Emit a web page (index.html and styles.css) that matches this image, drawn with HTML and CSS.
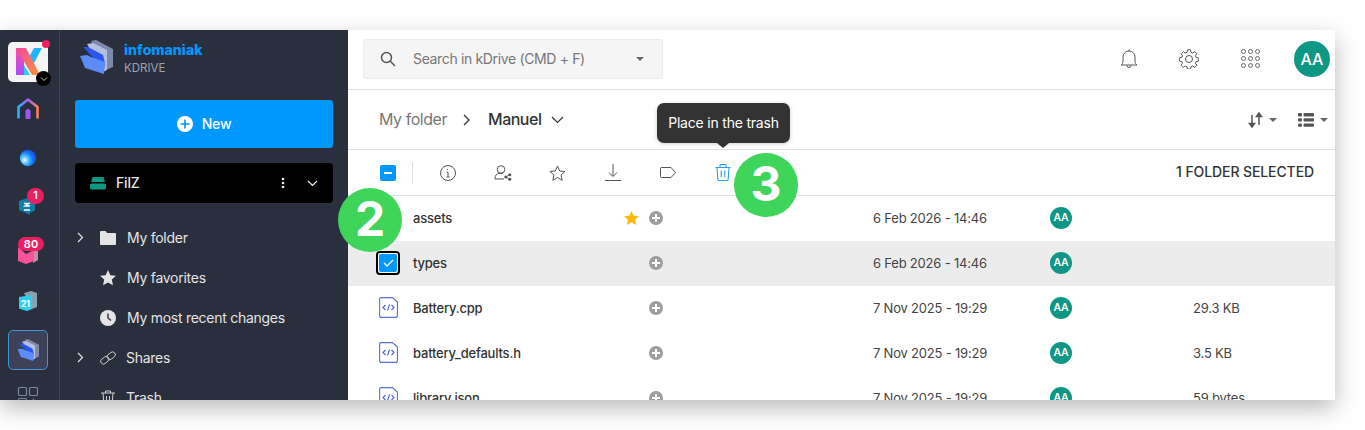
FILE: index.html
```html
<!DOCTYPE html>
<html lang="en">
<head>
    <meta charset="UTF-8">
    <title>kDrive</title>
    <link rel="stylesheet" href="styles.css">
</head>
<body>

<div class="window">
    <!-- App rail -->
    <div class="rail">
        <div class="rail-item logo-tile">
            <svg width="40" height="40" viewBox="0 0 40 40">
                <defs>
                    <linearGradient id="kLeft" x1="0" y1="0" x2="0" y2="1"><stop offset="0" stop-color="#ff4fa0"/><stop offset="1" stop-color="#a84dff"/></linearGradient>
                    <linearGradient id="kBand" x1="0" y1="0" x2="1" y2="1"><stop offset="0" stop-color="#f0489f"/><stop offset="1" stop-color="#ff9433"/></linearGradient>
                </defs>
                <path d="M8 6h8v27H8z" fill="url(#kLeft)"/>
                <path d="M21 15l5-9h8l-8 15z" fill="#1fb6ff"/>
                <path d="M16 33v-10l6 10z" fill="#27d0ff"/>
                <path d="M8 6h10l14 27h-8z" fill="url(#kBand)"/>
            </svg>
            <span class="dot"></span>
            <span class="tile-more">
                <svg width="8" height="8" viewBox="0 0 8 8"><path d="M1 2.500l3 3 3-3" fill="none" stroke="#ccc" stroke-width="1"/></svg>
            </span>
        </div>
        <div class="rail-item">
            <svg width="40" height="40" viewBox="0 0 40 40">
                <defs>
                    <linearGradient id="homeG" x1="0" y1="0" x2="1" y2="0"><stop offset="0" stop-color="#27b4ff"/><stop offset=".5" stop-color="#a35cf5"/><stop offset="1" stop-color="#ff7f5c"/></linearGradient>
                </defs>
                <path d="M10.500 28.500v-11.500l9.500-7.500 9.500 7.500v11.500" fill="none" stroke="url(#homeG)" stroke-width="2.600" stroke-linejoin="round"/>
                <path d="M17.500 21.500a2.500 2.500 0 0 1 5 0v7.500h-5z" fill="#9a58f0"/>
            </svg>
        </div>
        <div class="rail-item">
            <svg width="40" height="40" viewBox="0 0 40 40">
                <defs>
                    <radialGradient id="ball" cx=".3" cy=".62" r=".8"><stop offset="0" stop-color="#f2fbff"/><stop offset=".3" stop-color="#4fc0ff"/><stop offset=".6" stop-color="#1478f5"/><stop offset="1" stop-color="#1a38d8"/></radialGradient>
                </defs>
                <circle cx="20" cy="20" r="8.200" fill="url(#ball)"/>
            </svg>
        </div>
        <div class="rail-item">
            <svg width="40" height="40" viewBox="0 0 40 40">
                <path d="M19 12l8 3.500v9l-5 2.500-1 2-2-1.500-8-3.500v-9z" fill="#0f7ea8"/>
                <path d="M16 17.500h5l-4 2.500h5M16 24h6" fill="none" stroke="#fff" stroke-width="1.300"/>
            </svg>
            <span class="count count-one">1</span>
        </div>
        <div class="rail-item">
            <svg width="40" height="40" viewBox="0 0 40 40">
                <path d="M25 14l5 1v11l-5 3z" fill="#c98aa8"/>
                <path d="M10 13l8 7 8-4v11l-8 3-8-3z" fill="#f9539a"/>
            </svg>
            <span class="count count-many">80</span>
        </div>
        <div class="rail-item">
            <svg width="40" height="40" viewBox="0 0 40 40">
                <path d="M16 11l7-2 6 2v14l-5 2z" fill="#8aa0b0"/>
                <path d="M11 15l13-2v14l-5 2-8-2.500z" fill="#2fd0ee"/>
                <text x="17.500" y="25" class="cal-text">21</text>
            </svg>
        </div>
        <div class="rail-item is-active">
            <svg width="22" height="22" viewBox="0 0 34 34">
                <use href="#driveLogo"/>
            </svg>
        </div>
        <div class="rail-item">
            <svg width="40" height="40" viewBox="0 0 40 40">
                <g fill="none" stroke="#7d8794" stroke-width="1.200">
                    <rect x="10.500" y="9.500" width="8" height="8" rx="1"/>
                    <rect x="21.500" y="9.500" width="8" height="8" rx="1"/>
                    <rect x="10.500" y="20.500" width="8" height="8" rx="1"/>
                    <path d="M25.500 20.500v8M21.500 24.500h8"/>
                </g>
            </svg>
        </div>
    </div>

    <!-- Sidebar -->
    <div class="sidebar">
        <div class="brand">
            <svg width="34" height="34" viewBox="0 0 34 34">
                <defs>
                    <g id="driveLogo">
                        <path d="M12 1l5-1 17 9v18l-7 3z" fill="#7f8aab"/>
                        <path d="M8 4l6-1 14 7v20l-4 2z" fill="#b3c0e0"/>
                        <path d="M4 7l5 0 15 8 2 8-1 6z" fill="#2a55ee"/>
                        <path d="M1 16l7-1 4 2 14 5-1 12-19-6z" fill="#5c8cf7"/>
                    </g>
                </defs>
                <use href="#driveLogo"/>
            </svg>
            <div>
                <div class="brand-name">infomaniak</div>
                <div class="brand-sub">KDRIVE</div>
            </div>
        </div>

        <button class="new-btn">
            <svg width="16" height="16" viewBox="0 0 16 16"><circle cx="8" cy="8" r="8" fill="#fff"/><path d="M8 3.500v9M3.500 8h9" stroke="#0098ff" stroke-width="1.600"/></svg>
            <span class="nudge">New</span>
        </button>

        <div class="drive-box">
            <svg width="16" height="13" viewBox="0 0 16 13"><path d="M2.500 0h11L15 5H1z" fill="#0e9784"/><rect y="6.500" width="16" height="6" rx="1.500" fill="#0e9784"/></svg>
            <span class="drive-name nudge">FilZ</span>
            <svg class="drive-dots" width="4" height="12" viewBox="0 0 4 12"><circle cx="2" cy="2" r="1.300" fill="#eee"/><circle cx="2" cy="6" r="1.300" fill="#eee"/><circle cx="2" cy="10" r="1.300" fill="#eee"/></svg>
            <svg width="11" height="7" viewBox="0 0 11 7"><path d="M1 1l4.500 4.500L10 1" fill="none" stroke="#eee" stroke-width="1.200"/></svg>
        </div>

        <ul class="nav">
            <li>
                <svg class="nav-arrow" width="7" height="11" viewBox="0 0 7 11"><path d="M1 1l4.500 4.500L1 10" fill="none" stroke="#e4e4e4" stroke-width="1.200"/></svg>
                <svg class="nav-icon" width="16" height="14" viewBox="0 0 16 14"><path d="M0 1a1 1 0 0 1 1-1h4.500L7 2h8a1 1 0 0 1 1 1v10a1 1 0 0 1-1 1H1a1 1 0 0 1-1-1z" fill="#e4e4e4"/></svg>
                <span class="nudge">My folder</span>
            </li>
            <li>
                <svg class="nav-icon" width="16" height="16" viewBox="0 0 16 16"><path d="M8 0l2.400 5.200 5.600.6-4.200 3.800 1.200 5.600L8 12.400l-5 2.800 1.200-5.600L0 5.800l5.600-.6z" fill="#e4e4e4"/></svg>
                <span class="nudge">My favorites</span>
            </li>
            <li>
                <svg class="nav-icon" width="16" height="16" viewBox="0 0 16 16"><circle cx="8" cy="8" r="8" fill="#e4e4e4"/><path d="M8 3.500V8l3 2.500" fill="none" stroke="#2a2f3e" stroke-width="1.400"/></svg>
                <span class="nudge">My most recent changes</span>
            </li>
            <li>
                <svg class="nav-arrow" width="7" height="11" viewBox="0 0 7 11"><path d="M1 1l4.500 4.500L1 10" fill="none" stroke="#e4e4e4" stroke-width="1.200"/></svg>
                <svg class="nav-icon tight" width="16" height="14" viewBox="0 0 16 14"><g fill="none" stroke="#cfcfcf" stroke-width=".9"><rect x=".3" y="6.500" width="9" height="5.500" rx="2.700" transform="rotate(-38 4.800 9.200)"/><rect x="6.700" y="2" width="9" height="5.500" rx="2.700" transform="rotate(-38 11.200 4.800)"/></g></svg>
                <span class="nudge">Shares</span>
            </li>
            <li>
                <svg class="nav-icon tight" width="16" height="16" viewBox="0 0 16 16"><g fill="none" stroke="#cfcfcf" stroke-width="1"><path d="M1 3h14M5.500 3V1h5v2M3 3l1 12h8l1-12M6.500 6v6M9.500 6v6"/></g></svg>
                <span class="nudge">Trash</span>
            </li>
        </ul>
    </div>

    <!-- Main -->
    <div class="main">
        <div class="topbar">
            <div class="search">
                <svg width="16" height="16" viewBox="0 0 16 16"><circle cx="6.500" cy="6.500" r="5" fill="none" stroke="#555" stroke-width="1.500"/><path d="M10.300 10.300L15 15" stroke="#555" stroke-width="1.500"/></svg>
                <span class="search-text">Search in kDrive (CMD + F)</span>
                <span class="caret"></span>
            </div>
            <div class="top-icons">
                <svg width="18" height="20" viewBox="0 0 18 20"><g fill="none" stroke="#555" stroke-width="1"><path d="M1 16c1.500-1 2-2 2-4V8a6 6 0 0 1 12 0v4c0 2 .5 3 2 4z"/><path d="M7 16.500a2 2 0 0 0 4 0M9 .5v1.500"/></g></svg>
                <svg class="gear-icon" width="20" height="20" viewBox="0 0 20 20"><g fill="none" stroke="#555" stroke-width="1"><circle cx="10" cy="10" r="3.500"/><path d="M8.500.8h3l.5 2.500 1.700.7 2.100-1.400 2.100 2.100-1.400 2.100.7 1.700 2.500.5v3l-2.500.5-.7 1.700 1.400 2.100-2.100 2.100-2.100-1.400-1.700.7-.5 2.500h-3l-.5-2.500-1.700-.7-2.100 1.400-2.100-2.100 1.400-2.100-.7-1.700-2.500-.5v-3l2.500-.5.7-1.700-1.400-2.100 2.100-2.100 2.100 1.400 1.700-.7z"/></g></svg>
                <svg class="apps-icon" width="19" height="19" viewBox="0 0 19 19"><g fill="none" stroke="#666" stroke-width="1"><circle cx="2.500" cy="2.500" r="2"/><circle cx="9.500" cy="2.500" r="2"/><circle cx="16.500" cy="2.500" r="2"/><circle cx="2.500" cy="9.500" r="2"/><circle cx="9.500" cy="9.500" r="2"/><circle cx="16.500" cy="9.500" r="2"/><circle cx="2.500" cy="16.500" r="2"/><circle cx="9.500" cy="16.500" r="2"/><circle cx="16.500" cy="16.500" r="2"/></g></svg>
                <span class="avatar-big">AA</span>
            </div>
        </div>

        <div class="crumbs">
            <span class="crumb-parent nudge">My folder</span>
            <svg class="crumb-sep" width="8" height="12" viewBox="0 0 8 12"><path d="M1 1l5 5-5 5" fill="none" stroke="#333" stroke-width="1.300"/></svg>
            <span class="crumb-current nudge">Manuel</span>
            <svg width="13" height="8" viewBox="0 0 13 8"><path d="M1 1l5.500 5.500L12 1" fill="none" stroke="#333" stroke-width="1.200"/></svg>
            <div class="view-tools">
                <span class="view-tool">
                    <svg width="15" height="16" viewBox="0 0 15 16"><path d="M4 3v11M1.500 11.500L4 15l2.500-3.500z" stroke="#555" stroke-width="1.500" fill="#555"/><path d="M11 13V2M8.500 4.500L11 1l2.500 3.500z" stroke="#555" stroke-width="1.500" fill="#555"/></svg>
                    <span class="caret small"></span>
                </span>
                <span class="view-tool">
                    <svg width="16" height="14" viewBox="0 0 16 14" fill="#555"><rect y="0" width="4" height="3.400" rx="1"/><rect x="5.500" y="0" width="10.500" height="3.400" rx="1"/><rect y="5.200" width="4" height="3.400" rx="1"/><rect x="5.500" y="5.200" width="10.500" height="3.400" rx="1"/><rect y="10.400" width="4" height="3.400" rx="1"/><rect x="5.500" y="10.400" width="10.500" height="3.400" rx="1"/></svg>
                    <span class="caret small"></span>
                </span>
            </div>
        </div>

        <div class="toolbar">
            <span class="check-minus"></span>
            <span class="tool-sep"></span>
            <div class="tools">
                <span class="tool"><svg width="16" height="16" viewBox="0 0 16 16"><g fill="none" stroke="#555" stroke-width="1"><circle cx="8" cy="8" r="7.500"/><path d="M6.500 7H8v5M6.500 12h3M7.500 4v1"/></g></svg></span>
                <span class="tool"><svg width="18" height="16" viewBox="0 0 18 16"><g fill="none" stroke="#555" stroke-width="1"><circle cx="7" cy="4.500" r="3.800"/><path d="M10 14H1c-.3-3.500 2-5.500 4-5.700h4"/></g><g fill="#555"><circle cx="15.800" cy="9.700" r="1.500"/><circle cx="11.800" cy="12" r="1.500"/><circle cx="15.800" cy="14.300" r="1.500"/></g><path d="M15.800 9.700l-4 2.300 4 2.300" fill="none" stroke="#555" stroke-width=".8"/></svg></span>
                <span class="tool"><svg width="17" height="16" viewBox="0 0 17 16"><path d="M8.500 1l2.200 5 5.300.5-4 3.600 1.200 5.200-4.700-2.800-4.700 2.800L5 10.100 1 6.500 6.300 6z" fill="none" stroke="#555" stroke-width="1"/></svg></span>
                <span class="tool"><svg width="16" height="17" viewBox="0 0 16 17"><g fill="none" stroke="#555" stroke-width="1"><path d="M8 0v12M4 8.500l4 4 4-4M0 16.500h16"/></g></svg></span>
                <span class="tool"><svg width="16" height="11" viewBox="0 0 16 11"><path d="M1.500.5H11l4.500 5-4.500 5H1.500a1 1 0 0 1-1-1v-8a1 1 0 0 1 1-1z" fill="none" stroke="#555" stroke-width="1"/></svg></span>
                <span class="tool"><svg width="16" height="17" viewBox="0 0 16 17"><g fill="none" stroke="#2b9bef" stroke-width="1.100"><path d="M.5 3.500h15M5 3.500V1.200a.7.7 0 0 1 .7-.7h4.600a.7.7 0 0 1 .7.7v2.300M2 3.500l.8 11.500a1.500 1.500 0 0 0 1.500 1.500h7.400a1.500 1.500 0 0 0 1.500-1.500L14 3.500M6.200 6.500v6.500M9.800 6.500v6.500"/></g></svg></span>
            </div>
            <span class="selected-count nudge">1 FOLDER SELECTED</span>
        </div>

        <div class="rows">
            <div class="row">
                <span></span>
                <span class="file-name">assets</span>
                <svg class="star" width="15" height="14" viewBox="0 0 15 14"><path d="M7.500 0l2.200 4.700 5.300.6-3.900 3.500 1.100 5.200-4.700-2.700L2.800 14l1.100-5.200L0 5.300l5.300-.6z" fill="#fdb813"/></svg>
                <span class="add-tag"></span>
                <span class="date">6 Feb 2026 - 14:46</span>
                <span class="avatar-small">AA</span>
                <span></span>
            </div>
            <div class="row is-selected">
                <span class="check-ring"><span class="check-on"><svg width="11" height="8" viewBox="0 0 11 8"><path d="M1 4l3 3 6-6" fill="none" stroke="#fff" stroke-width="1.300"/></svg></span></span>
                <span class="file-name">types</span>
                <span></span>
                <span class="add-tag"></span>
                <span class="date">6 Feb 2026 - 14:46</span>
                <span class="avatar-small">AA</span>
                <span></span>
            </div>
            <div class="row">
                <svg class="file-icon" width="19" height="21" viewBox="0 0 19 21"><use href="#codeFile"/></svg>
                <span class="file-name">Battery.cpp</span>
                <span></span>
                <span class="add-tag"></span>
                <span class="date">7 Nov 2025 - 19:29</span>
                <span class="avatar-small">AA</span>
                <span class="size">29.3 KB</span>
            </div>
            <div class="row">
                <svg class="file-icon" width="19" height="21" viewBox="0 0 19 21">
                    <defs>
                        <g id="codeFile">
                            <path d="M2 .6h11.500L18.400 5v13.400a2 2 0 0 1-2 2H2.600a2 2 0 0 1-2-2V2a1.400 1.400 0 0 1 1.400-1.400z" fill="none" stroke="#5b6fd6" stroke-width="1.100"/>
                            <path d="M6.500 8l-2.500 2.500L6.500 13M12.500 8l2.500 2.500-2.500 2.500M10.500 7.500l-2 6" fill="none" stroke="#4a62d8" stroke-width="1.100"/>
                        </g>
                    </defs>
                    <use href="#codeFile"/>
                </svg>
                <span class="file-name">battery_defaults.h</span>
                <span></span>
                <span class="add-tag"></span>
                <span class="date">7 Nov 2025 - 19:29</span>
                <span class="avatar-small">AA</span>
                <span class="size">3.5 KB</span>
            </div>
            <div class="row">
                <svg class="file-icon" width="19" height="21" viewBox="0 0 19 21"><use href="#codeFile"/></svg>
                <span class="file-name">library.json</span>
                <span></span>
                <span class="add-tag"></span>
                <span class="date">7 Nov 2025 - 19:29</span>
                <span class="avatar-small">AA</span>
                <span class="size">59 bytes</span>
            </div>
        </div>

        <!-- Tooltip and step markers sit over the content -->
        <div class="tooltip">Place in the trash</div>
        <div class="step step-two">2</div>
        <div class="step step-three">3</div>
    </div>
</div>

</body>
</html>
```

FILE: styles.css
```css
* {
    box-sizing: border-box;
}
html, body {
    height: 430px;
    overflow: hidden;
}
body {
    margin: 0;
    padding: 30px 30px 0 0;
    background-color: #fff;
    font-family: Inter, "Liberation Sans", sans-serif;
    color: #333;
}
svg {
    display: block;
    flex: none;
}
.nudge {
    margin-bottom: 2px;
}
.window {
    display: flex;
    height: 370px;
    background-color: #fff;
    overflow: hidden;
    box-shadow: 0 8px 22px rgba(0, 0, 0, 0.28);
}

/* Rail */
.rail {
    width: 60px;
    flex: none;
    display: flex;
    flex-direction: column;
    align-items: center;
    gap: 8px;
    padding: 12px 3px 0 0;
    background-color: #2a2f3e;
    border-right: 1px solid #3c4352;
}
.rail-item {
    position: relative;
    width: 40px;
    height: 40px;
    flex: none;
    display: flex;
    align-items: center;
    justify-content: center;
    border-radius: 5px;
}
.logo-tile {
    background-color: #f5f5f5;
}
.is-active {
    background-color: #3e4259;
    border: 1px solid #3f95d8;
}
.dot {
    position: absolute;
    top: -2px;
    right: -2px;
    width: 8px;
    height: 8px;
    border-radius: 50%;
    background-color: #ee1f63;
}
.tile-more {
    position: absolute;
    right: -3px;
    bottom: -4px;
    width: 15px;
    height: 15px;
    border-radius: 50%;
    background-color: #000;
    display: flex;
    align-items: center;
    justify-content: center;
}
.count {
    position: absolute;
    height: 16px;
    min-width: 16px;
    border-radius: 8px;
    background-color: #e91e63;
    color: #fff;
    font-size: 10.500px;
    font-weight: 600;
    line-height: 16px;
    text-align: center;
}
.count-one {
    top: 2px;
    left: 19px;
    width: 17px;
}
.count-many {
    top: 3px;
    left: 10px;
    width: 26px;
    height: 14px;
    line-height: 14px;
    font-size: 11px;
}
.cal-text {
    font-size: 8.500px;
    font-weight: 700;
    fill: #fff;
    text-anchor: middle;
}

/* Sidebar */
.sidebar {
    width: 288px;
    flex: none;
    padding: 0 15px;
    background-color: #2a2f3e;
    color: #e4e4e4;
}
.brand {
    height: 70px;
    display: flex;
    align-items: flex-start;
    gap: 11px;
    padding: 10px 0 0 4px;
}
.brand-name {
    margin-top: 1px;
    font-size: 14px;
    font-weight: 800;
    color: #0098ff;
    line-height: 18px;
    letter-spacing: 0.1px;
}
.brand-sub {
    margin-top: 1px;
    font-size: 11.500px;
    color: #9ba3ad;
    line-height: 16px;
}
.new-btn {
    width: 100%;
    height: 48px;
    display: flex;
    align-items: center;
    justify-content: center;
    gap: 9px;
    border: none;
    border-radius: 3px;
    background-color: #0098ff;
    color: #fff;
    font-family: inherit;
    font-size: 14px;
    font-weight: 500;
    letter-spacing: -0.2px;
}
.drive-box {
    height: 40px;
    margin-top: 15px;
    display: flex;
    align-items: center;
    padding: 0 15px;
    border-radius: 4px;
    background-color: #000;
}
.drive-name {
    flex: 1;
    margin-left: 10px;
    font-size: 14px;
    font-weight: 500;
    letter-spacing: -0.2px;
}
.drive-dots {
    margin-right: 22px;
}
.nav {
    list-style: none;
    margin: 15px 0 0 0;
    padding: 0;
}
.nav li {
    position: relative;
    height: 40px;
    display: flex;
    align-items: center;
    padding-left: 25px;
    font-size: 14px;
    letter-spacing: -0.27px;
}
.nav-icon {
    margin-right: 11px;
}
.nav-icon.tight {
    margin-right: 10px;
}
.nav-arrow {
    position: absolute;
    left: 2px;
    top: 14px;
}

/* Main */
.main {
    position: relative;
    flex: 1;
    min-width: 0;
}
.topbar {
    height: 60px;
    display: flex;
    align-items: center;
    padding: 0 5px 2px 15px;
    border-bottom: 1px solid #e0e0e0;
}
.search {
    width: 300px;
    height: 40px;
    display: flex;
    align-items: center;
    padding: 0 18px 0 16px;
    background-color: #f5f5f5;
    border: 1px solid #ebebeb;
    border-radius: 3px;
}
.search-text {
    flex: 1;
    margin-left: 17px;
    font-size: 14px;
    letter-spacing: -0.35px;
    color: #777;
}
.caret {
    width: 0;
    height: 0;
    border-left: 4px solid transparent;
    border-right: 4px solid transparent;
    border-top: 4px solid #666;
}
.caret.small {
    margin-left: 6px;
}
.top-icons {
    margin-left: auto;
    display: flex;
    align-items: center;
}
.top-icons svg {
    margin-right: 41px;
}
.top-icons .gear-icon {
    margin-right: 42px;
}
.top-icons .apps-icon {
    margin-right: 34px;
}
.avatar-big {
    width: 36px;
    height: 36px;
    border-radius: 50%;
    background-color: #0e9784;
    color: #fff;
    font-size: 16px;
    font-weight: 500;
    line-height: 36px;
    text-align: center;
}
.crumbs {
    height: 60px;
    display: flex;
    align-items: center;
    padding: 0 7px 0 31px;
    border-bottom: 1px solid #e0e0e0;
}
.crumb-parent {
    font-size: 16px;
    letter-spacing: -0.45px;
    color: #777;
}
.crumb-sep {
    margin: 0 17px 0 16px;
}
.crumb-current {
    font-size: 16px;
    font-weight: 500;
    letter-spacing: -0.5px;
    color: #333;
    margin-right: 10px;
}
.view-tools {
    margin-left: auto;
    display: flex;
    align-items: center;
    gap: 21px;
}
.view-tool {
    display: flex;
    align-items: center;
}
.toolbar {
    height: 46px;
    display: flex;
    align-items: center;
    padding: 0 21px 0 32px;
    border-bottom: 1px solid #e0e0e0;
}
.check-minus {
    position: relative;
    width: 16px;
    height: 16px;
    border-radius: 2px;
    background-color: #0098ff;
}
.check-minus::after {
    content: "";
    position: absolute;
    left: 4px;
    top: 7px;
    width: 8px;
    height: 2px;
    background-color: #fff;
}
.tool-sep {
    width: 1px;
    height: 22px;
    margin-left: 16px;
    background-color: #ddd;
}
.tools {
    display: flex;
    margin-left: 7px;
}
.tool {
    width: 55px;
    height: 20px;
    display: flex;
    align-items: center;
    justify-content: center;
}
.selected-count {
    margin-left: auto;
    font-size: 14px;
    font-weight: 500;
    color: #333;
    letter-spacing: -0.1px;
}
.row {
    height: 45px;
    display: grid;
    grid-template-columns: 34px 211px 25px 224px 177px 143px 1fr;
    align-items: center;
    padding: 0 0 2px 31px;
    font-size: 13px;
    letter-spacing: -0.2px;
}
.is-selected {
    background-color: #ececec;
}
.file-name {
    font-weight: 500;
    color: #333;
}
.add-tag {
    position: relative;
    width: 14px;
    height: 14px;
    border-radius: 50%;
    background-color: #9e9e9e;
}
.add-tag::before,
.add-tag::after {
    content: "";
    position: absolute;
    background-color: #fff;
}
.add-tag::before {
    left: 3px;
    top: 6px;
    width: 8px;
    height: 2px;
}
.add-tag::after {
    left: 6px;
    top: 3px;
    width: 2px;
    height: 8px;
}
.date, .size {
    color: #444;
}
.avatar-small {
    width: 22px;
    height: 22px;
    border-radius: 50%;
    background-color: #0e9784;
    color: #fff;
    font-size: 10.500px;
    font-weight: 600;
    line-height: 22px;
    text-align: center;
}
.check-ring {
    width: 24px;
    height: 24px;
    margin-left: -3px;
    display: flex;
    align-items: center;
    justify-content: center;
    border: 2px solid #000;
    border-radius: 4px;
    background-color: #fff;
}
.check-on {
    width: 18px;
    height: 18px;
    display: flex;
    align-items: center;
    justify-content: center;
    border-radius: 2px;
    background-color: #0098ff;
}

/* Overlays */
.tooltip {
    position: absolute;
    left: 309px;
    top: 73px;
    width: 133px;
    height: 40px;
    border-radius: 7px;
    background-color: #333;
    color: #fff;
    font-size: 14px;
    letter-spacing: -0.2px;
    line-height: 39px;
    text-align: center;
    box-shadow: 0 1px 4px rgba(0, 0, 0, 0.2);
}
.tooltip::after {
    content: "";
    position: absolute;
    left: 60px;
    bottom: -5px;
    border-left: 6px solid transparent;
    border-right: 6px solid transparent;
    border-top: 5px solid #333;
}
.step {
    position: absolute;
    width: 64px;
    height: 64px;
    border-radius: 50%;
    background-color: #3fd45a;
    color: #fff;
    font-size: 48px;
    font-weight: 700;
    line-height: 62px;
    text-align: center;
}
.step-two {
    left: -10px;
    top: 158px;
}
.step-three {
    left: 386px;
    top: 123px;
}
```
